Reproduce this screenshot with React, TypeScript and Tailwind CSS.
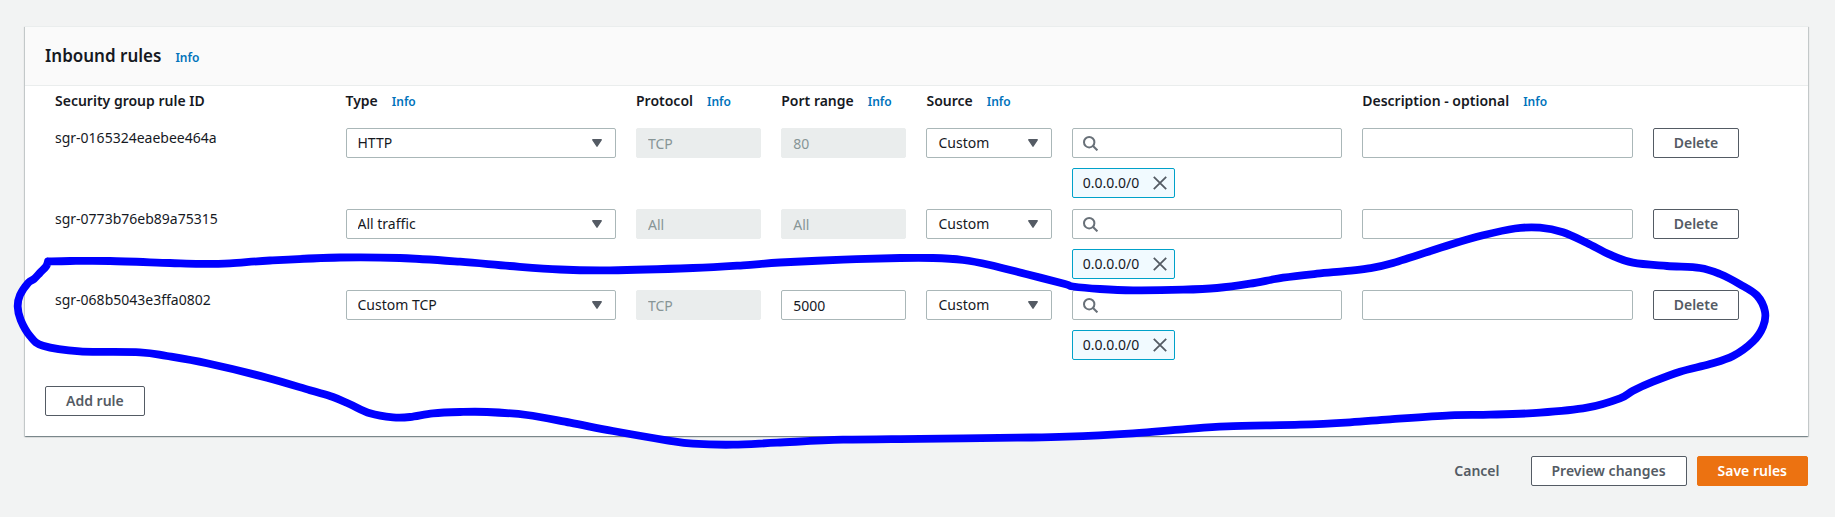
import React from "react";

type Rule = {
  id: string;
  type: string;
  protocol: string;
  port: string;
  portEditable: boolean;
  source: string;
  cidr: string;
};

const rules: Rule[] = [
  { id: "sgr-0165324eaebee464a", type: "HTTP", protocol: "TCP", port: "80", portEditable: false, source: "Custom", cidr: "0.0.0.0/0" },
  { id: "sgr-0773b76eb89a75315", type: "All traffic", protocol: "All", port: "All", portEditable: false, source: "Custom", cidr: "0.0.0.0/0" },
  { id: "sgr-068b5043e3ffa0802", type: "Custom TCP", protocol: "TCP", port: "5000", portEditable: true, source: "Custom", cidr: "0.0.0.0/0" },
];

const types = ["HTTP", "All traffic", "Custom TCP"];
const sources = ["Custom", "Anywhere", "My IP"];

function Info({ topic }: { topic: string }) {
  return (
    <a href="#info" aria-label={`Info: ${topic}`} className="text-xs font-semibold text-[#0073bb]">
      Info
    </a>
  );
}

function Button({ children, label, kind = "normal" }: { children: string; label?: string; kind?: "normal" | "primary" | "link" }) {
  const look =
    kind === "primary"
      ? "border-[#ec7211] bg-[#ec7211] text-white"
      : kind === "link"
        ? "border-transparent text-[#545b64]"
        : "border-[#545b64] bg-white text-[#545b64]";
  return (
    <button type="button" aria-label={label} className={`h-[30px] rounded-[2px] border px-5 text-sm font-semibold whitespace-nowrap ${look}`}>
      {children}
    </button>
  );
}

function Select({ label, value, options }: { label: string; value: string; options: string[] }) {
  return (
    <div className="grid items-center">
      <select
        aria-label={label}
        defaultValue={value}
        className="col-start-1 row-start-1 h-[30px] w-full appearance-none rounded-[2px] border border-[#aab7b8] bg-white pr-8 pl-[11px] text-sm text-[#16191f]"
      >
        {options.map((o) => (
          <option key={o}>{o}</option>
        ))}
      </select>
      <svg className="pointer-events-none col-start-1 row-start-1 mr-[14px] justify-self-end" width="10" height="8" viewBox="0 0 10 8" aria-hidden="true">
        <path d="M0.8 0.8H9.2L5 7.2Z" fill="#545b64" stroke="#545b64" strokeWidth="1.4" strokeLinejoin="round" />
      </svg>
    </div>
  );
}

function TextField({ label, value, disabled }: { label: string; value?: string; disabled?: boolean }) {
  const look = disabled ? "border-[#eaeded] bg-[#eaeded] text-[#879596]" : "border-[#aab7b8] bg-white text-[#16191f]";
  return (
    <input
      type="text"
      aria-label={label}
      defaultValue={value}
      disabled={disabled}
      className={`block h-[30px] w-full rounded-[2px] border px-[11px] text-sm ${look}`}
    />
  );
}

function SearchField({ label }: { label: string }) {
  return (
    <div className="grid items-center">
      <input
        type="search"
        aria-label={label}
        className="col-start-1 row-start-1 h-[30px] w-full appearance-none rounded-[2px] border border-[#aab7b8] bg-white pr-3 pl-8 text-sm text-[#16191f]"
      />
      <svg className="pointer-events-none col-start-1 row-start-1 ml-[11px]" width="15" height="15" viewBox="0 0 15 15" fill="none" stroke="#687078" strokeWidth="2" aria-hidden="true">
        <circle cx="6.2" cy="6.2" r="5.2" />
        <path d="M9.8 9.8L14.4 14.4" />
      </svg>
    </div>
  );
}

function Token({ text }: { text: string }) {
  return (
    <span className="mt-2.5 inline-flex h-[30px] items-center gap-3.5 rounded-[2px] border border-[#00a1c9] bg-[#f1faff] pr-[7px] pl-2.5 align-top text-sm text-[#16191f]">
      {text}
      <button type="button" aria-label={`Remove ${text}`}>
        <svg className="block" width="14" height="14" viewBox="0 0 14 14" fill="none" stroke="#545b64" strokeWidth="1.8" aria-hidden="true">
          <path d="M0.8 0.8L13.2 13.2M13.2 0.8L0.8 13.2" />
        </svg>
      </button>
    </span>
  );
}

function HeaderCell({ children, info = true }: { children: string; info?: boolean }) {
  return (
    <th scope="col" className="h-[42px] px-2.5 pt-[5px] pb-0 text-left align-top text-sm font-semibold whitespace-nowrap text-[#16191f]">
      <span className="inline-flex items-baseline gap-3.5">
        {children}
        {info && <Info topic={children} />}
      </span>
    </th>
  );
}

// Hand-drawn highlight loop around the last rule.
const loop: [number, number][] = [
  [48, 261.5], [70, 261], [110, 261], [170, 263], [200, 263.8], [230, 263.3], [270, 260.5], [340, 257.5], [400, 258], [460, 261.7],
  [510, 266], [560, 269.5], [610, 270.3], [693, 268], [743, 265.3], [780, 262.5], [843, 259.7], [900, 258], [933, 258], [963, 260],
  [990, 265], [1027, 274.3], [1065, 284], [1073, 286.5], [1100, 289], [1133, 290.3], [1183, 289.7], [1217, 288], [1250, 283.7],
  [1283, 277.7], [1317, 273.7], [1345, 271.2], [1367, 268.7], [1393, 263], [1450, 244.7], [1483, 235.3], [1515, 228.5], [1540, 227.7],
  [1563, 232.3], [1587, 243], [1610, 254.7], [1633, 262.7], [1667, 266], [1700, 268], [1720, 274], [1740, 284.3], [1757, 295.5],
  [1765, 311.7], [1763, 326.7], [1753, 341.5], [1733, 356], [1710, 364], [1680, 371.7], [1653, 381.7], [1633, 390.7], [1620, 398.3],
  [1587, 407.7], [1540, 412.7], [1490, 414.7], [1450, 415.3], [1390, 419.3], [1350, 422.3], [1300, 424.7], [1227, 426.3], [1183, 429.3],
  [1133, 433.3], [1067, 436.7], [1017, 437.7], [920, 438.8], [843, 439.7], [777, 442.7], [733, 444.7], [693, 443.7], [667, 440.3],
  [613, 431], [570, 422.7], [527, 415], [487, 412], [460, 412], [433, 413.3], [410, 417], [393, 417.3], [370, 413.3], [350, 404.3],
  [333, 397], [310, 390.3], [267, 377.7], [207, 363.3], [167, 356], [140, 352.3], [80, 351.3], [43, 345.7], [30, 336], [20.7, 320],
  [17.7, 306.7], [20, 295], [28.3, 282.7], [34, 279], [40, 272.7], [46, 266.5], [48, 261.5],
];

function smooth(points: [number, number][]): string {
  let d = `M${points[0][0]} ${points[0][1]}`;
  for (let i = 0; i < points.length - 1; i++) {
    const p0 = points[Math.max(i - 1, 0)];
    const p1 = points[i];
    const p2 = points[i + 1];
    const p3 = points[Math.min(i + 2, points.length - 1)];
    d += `C${p1[0] + (p2[0] - p0[0]) / 6} ${p1[1] + (p2[1] - p0[1]) / 6} ${p2[0] - (p3[0] - p1[0]) / 6} ${p2[1] - (p3[1] - p1[1]) / 6} ${p2[0]} ${p2[1]}`;
  }
  return d;
}

export default function App() {
  return (
    <main className="relative min-h-screen bg-[#f2f3f3] pt-[26px] pr-[27px] pb-8 pl-[25px] font-['Noto_Sans','Open_Sans',sans-serif] text-sm text-[#16191f]">
      <section className="border-t border-[#eaeded] bg-white shadow-[0_1px_1px_0_rgba(0,28,36,0.3),1px_1px_1px_0_rgba(0,28,36,0.15),-1px_1px_1px_0_rgba(0,28,36,0.15)]">
        <header className="flex h-[59px] items-center border-b border-[#eaeded] bg-[#fafafa] px-5">
          <div className="flex items-baseline gap-3.5">
            <h2 className="text-[17px] leading-6 font-semibold">Inbound rules</h2>
            <Info topic="Inbound rules" />
          </div>
        </header>
        <div className="px-5 pb-5">
          <table className="w-full table-fixed border-collapse">
            <colgroup>
              <col className="w-2/12" />
              <col className="w-2/12" />
              <col className="w-1/12" />
              <col className="w-1/12" />
              <col className="w-1/12" />
              <col className="w-2/12" />
              <col className="w-2/12" />
              <col className="w-1/12" />
            </colgroup>
            <thead>
              <tr>
                <HeaderCell info={false}>Security group rule ID</HeaderCell>
                <HeaderCell>Type</HeaderCell>
                <HeaderCell>Protocol</HeaderCell>
                <HeaderCell>Port range</HeaderCell>
                <HeaderCell>Source</HeaderCell>
                <td />
                <HeaderCell>Description - optional</HeaderCell>
                <td />
              </tr>
            </thead>
            <tbody>
              {rules.map((r) => (
                <tr key={r.id} className="align-top">
                  <td className="px-2.5 pb-[11px]">{r.id}</td>
                  <td className="px-2.5 pb-[11px]">
                    <Select label={`Type of ${r.id}`} value={r.type} options={types} />
                  </td>
                  <td className="px-2.5 pb-[11px]">
                    <TextField label={`Protocol of ${r.id}`} value={r.protocol} disabled />
                  </td>
                  <td className="px-2.5 pb-[11px]">
                    <TextField label={`Port range of ${r.id}`} value={r.port} disabled={!r.portEditable} />
                  </td>
                  <td className="px-2.5 pb-[11px]">
                    <Select label={`Source of ${r.id}`} value={r.source} options={sources} />
                  </td>
                  <td className="px-2.5 pb-[11px]">
                    <SearchField label={`Search source of ${r.id}`} />
                    <Token text={r.cidr} />
                  </td>
                  <td className="px-2.5 pb-[11px]">
                    <TextField label={`Description of ${r.id}`} />
                  </td>
                  <td className="px-2.5 pb-[11px]">
                    <Button label={`Delete ${r.id}`}>Delete</Button>
                  </td>
                </tr>
              ))}
            </tbody>
          </table>
          <div className="mt-[15px] flex">
            <Button>Add rule</Button>
          </div>
        </div>
      </section>
      <footer className="mt-5 flex justify-end gap-2.5">
        <Button kind="link">Cancel</Button>
        <Button>Preview changes</Button>
        <Button kind="primary">Save rules</Button>
      </footer>
      <svg className="pointer-events-none absolute top-0 left-0" width="1835" height="517" viewBox="0 0 1835 517" fill="none" aria-hidden="true">
        <path d={smooth(loop)} stroke="#0000ff" strokeWidth="7.8" strokeLinecap="round" strokeLinejoin="round" />
      </svg>
    </main>
  );
}
